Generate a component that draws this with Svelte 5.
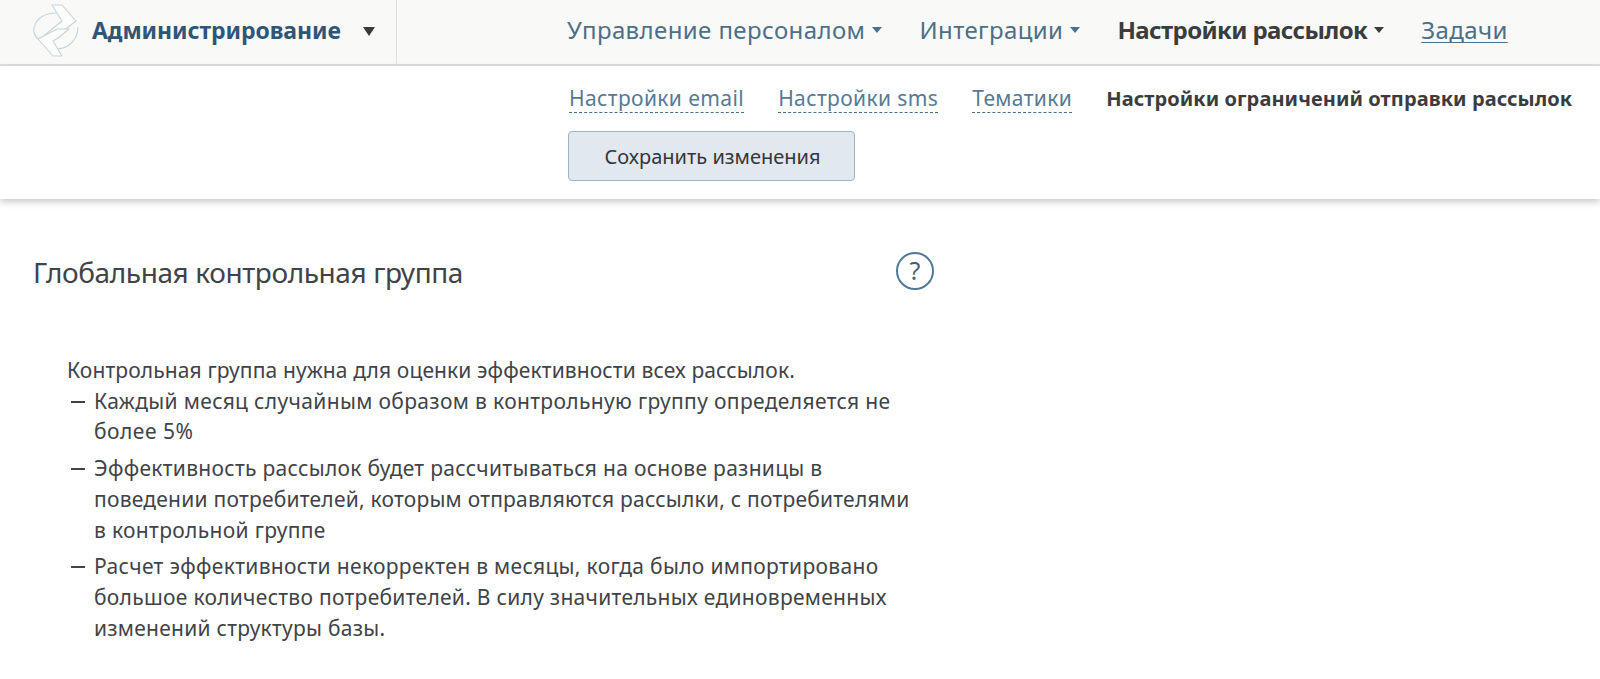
<script>
  const items = [
    [['Каждый месяц случайным образом в контрольную группу определяется не', 0.35], ['более 5%', 0.5]],
    [['Эффективность рассылок будет рассчитываться на основе разницы в', 0.3], ['поведении потребителей, которым отправляются рассылки, с потребителями', 0.23], ['в контрольной группе', 0.33]],
    [['Расчет эффективности некорректен в месяцы, когда было импортировано', 0.33], ['большое количество потребителей. В силу значительных единовременных', 0.29], ['изменений структуры базы.', 0.27]]
  ];
</script>

<div class="page">
  <header class="top">
    <div class="brand">
      <svg class="logo" viewBox="0 0 65 62" width="65" height="62" fill="none" stroke="#c6d5db" stroke-width="1.1" stroke-linejoin="round">
        <path d="M9 27 C11 17 20 12 31 12" />
        <path d="M9 27 C8 32 10 35 13 38" />
        <path d="M53 26 C53 38 44 48 31 48" />
        <path d="M27 4 L37 4 L51 20 L33 34 L20 34 L32 24 L37 20 Z" fill="#fcfcfb"/>
        <path d="M37 55 L28 55 L13 38 L32 28 L44 28 L33 37 L28 40 Z" fill="#fcfcfb"/>
      </svg>
      <span class="brand-name">Администрирование</span>
      <span class="brand-caret"></span>
    </div>
    <nav class="main">
      <span class="nav-item">Управление персоналом<i class="caret"></i></span>
      <span class="nav-item">Интеграции<i class="caret"></i></span>
      <span class="nav-item active">Настройки рассылок<i class="caret"></i></span>
      <a class="nav-link" href="#tasks">Задачи</a>
    </nav>
  </header>

  <section class="sub">
    <div class="tabs">
      <span class="tab">Настройки email</span>
      <span class="tab">Настройки sms</span>
      <span class="tab">Тематики</span>
      <span class="tab current">Настройки ограничений отправки рассылок</span>
    </div>
    <button class="save">Сохранить изменения</button>
  </section>

  <main class="content">
    <div class="head">
      <h1>Глобальная контрольная группа</h1>
      <span class="help">?</span>
    </div>
    <div class="desc">
      <p>Контрольная группа нужна для оценки эффективности всех рассылок.</p>
      <ul>
        {#each items as lines}
          <li>
            {#each lines as [text, spacing]}<span class="line" style:letter-spacing="{spacing}px">{text}</span>{/each}
          </li>
        {/each}
      </ul>
    </div>
  </main>
</div>

<style>
  :global(body) {
    margin: 0;
    background: #fff;
  }
  .page {
    height: 679px;
    overflow: hidden;
    font-family: "Noto Sans", "Open Sans", sans-serif;
    color: #404348;
  }
  .top {
    display: flex;
    height: 64px;
    background: #f9f9f7;
    border-bottom: 2px solid #dfdfdd;
  }
  .brand {
    display: flex;
    align-items: center;
    width: 397px;
    box-sizing: border-box;
    padding-left: 25px;
    border-right: 1px solid #dfdfdd;
  }
  .logo {
    flex: none;
  }
  .brand-name {
    margin: 0 0 4px 2px;
    font-size: 23px;
    font-weight: 700;
    color: #2f5577;
    letter-spacing: -0.07px;
  }
  .brand-caret {
    margin-left: 22px;
    margin-bottom: 2px;
    width: 0;
    height: 0;
    border-left: 6px solid transparent;
    border-right: 6px solid transparent;
    border-top: 9px solid #3b3b3b;
  }
  .main {
    display: flex;
    align-items: center;
    margin-left: 170px;
    padding-bottom: 5px;
    font-size: 24px;
    letter-spacing: 0.4px;
    color: #4d6f87;
  }
  .nav-item {
    display: flex;
    align-items: center;
    margin-right: 37px;
  }
  .nav-item.active {
    font-weight: 700;
    letter-spacing: -0.6px;
    color: #3a3c40;
  }
  .caret {
    margin-left: 7px;
    width: 0;
    height: 0;
    border-left: 5.5px solid transparent;
    border-right: 5.5px solid transparent;
    border-top: 6px solid currentColor;
  }
  .nav-link {
    color: #4d6f87;
    text-decoration: underline;
    text-decoration-thickness: 1px;
    text-underline-offset: 3px;
  }
  .sub {
    box-sizing: border-box;
    height: 133px;
    padding: 19px 0 0 569px;
    box-shadow: 0 3px 7px rgba(0, 0, 0, 0.22);
  }
  .tabs {
    display: flex;
    gap: 34px;
    font-size: 21px;
    letter-spacing: 0.38px;
    white-space: nowrap;
    color: #567a94;
  }
  .tab {
    line-height: 27px;
    border-bottom: 1px dashed #4a6f8a;
  }
  .tab.current {
    border-bottom: 0;
    font-size: 20px;
    font-weight: 700;
    letter-spacing: 0.08px;
    color: #3a3c40;
  }
  .save {
    display: block;
    box-sizing: border-box;
    width: 287px;
    height: 50px;
    margin: 18px 0 0 -1px;
    padding: 0 0 0 2px;
    border: 1px solid #9ab6c8;
    border-radius: 4px;
    background: #e1e8f0;
    color: #33363b;
    font: inherit;
    font-size: 20px;
  }
  .content {
    padding: 52px 0 0 33px;
  }
  .head {
    display: flex;
    align-items: center;
    justify-content: space-between;
    width: 901px;
  }
  h1 {
    margin: 0;
    font-size: 28px;
    font-weight: 400;
    letter-spacing: -0.4px;
    line-height: 42px;
  }
  .help {
    display: flex;
    align-items: center;
    justify-content: center;
    box-sizing: border-box;
    width: 38px;
    height: 38px;
    margin-top: -2px;
    padding-bottom: 2px;
    border: 2px solid #4f7b98;
    border-radius: 50%;
    font-size: 25px;
    color: #3f5f78;
  }
  .desc {
    margin: 62px 0 0 34px;
    font-size: 21px;
    line-height: 30.7px;
    letter-spacing: 0.12px;
    white-space: nowrap;
  }
  p {
    margin: 0;
  }
  ul {
    margin: 0;
    padding: 0;
    list-style: none;
  }
  li {
    position: relative;
    padding-left: 27px;
    margin-bottom: 6px;
  }
  li::before {
    content: "";
    position: absolute;
    left: 4px;
    top: 15px;
    width: 14px;
    height: 2px;
    background: #404348;
  }
  .line {
    display: block;
  }
</style>
